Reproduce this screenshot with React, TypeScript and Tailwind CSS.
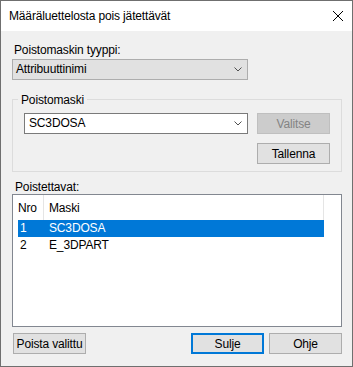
import React from "react";

function Chevron() {
  return (
    <svg width="8" height="5" viewBox="0 0 8 5" className="shrink-0">
      <path d="M0.5 0.5 L4 4 L7.5 0.5" fill="none" stroke="#505050" strokeWidth="1" />
    </svg>
  );
}

function Btn({ children, className = "" }: { children: React.ReactNode; className?: string }) {
  return (
    <div
      className={
        "w-[73px] h-[21px] flex items-center justify-center leading-[16px] " +
        className
      }
    >
      {children}
    </div>
  );
}

export default function App() {
  return (
    <div className="w-[353px] h-[367px] border border-[#6f6f6f] bg-[#f0f0f0] flex flex-col text-[12px] tracking-[-0.15px] text-black font-['Liberation_Sans',Arial,sans-serif] overflow-hidden">
      {/* Title bar */}
      <div className="h-[30px] bg-white flex items-center justify-between pl-[8px] pr-[9px] shrink-0">
        <span className="leading-[30px]">Määräluettelosta pois jätettävät</span>
        <svg width="10" height="10" viewBox="0 0 10 10">
          <path d="M0 0L10 10M10 0L0 10" stroke="#000" strokeWidth="1" />
        </svg>
      </div>

      {/* Body */}
      <div className="flex flex-col pl-[11px] pt-[11px]">
        <div className="h-[16px] leading-[16px] pl-[2px]">Poistomaskin tyyppi:</div>
        <div className="mt-[1px] w-[236px] h-[21px] border border-[#adadad] bg-[#e1e1e1] flex items-center justify-between pl-[3px] pr-[5px]">
          <span className="leading-[19px]">Attribuuttinimi</span>
          <Chevron />
        </div>

        {/* Group box */}
        <div className="relative mt-[19px] w-[330px] h-[73px] border border-[#dcdcdc] flex pt-[13px] pl-[11px]">
          <span className="absolute left-[5px] top-[-8px] px-[3px] bg-[#f0f0f0] leading-[16px]">
            Poistomaski
          </span>
          <div className="w-[224px] h-[21px] border border-[#7a7a7a] bg-white flex items-center justify-between pl-[4px] pr-[5px]">
            <span className="leading-[19px]">SC3DOSA</span>
            <Chevron />
          </div>
          <div className="ml-[9px] flex flex-col gap-[9px]">
            <Btn className="border border-[#bfbfbf] bg-[#cccccc] text-[#838383]">Valitse</Btn>
            <Btn className="border border-[#adadad] bg-[#e1e1e1]">Tallenna</Btn>
          </div>
        </div>

        <div className="mt-[9px] h-[13px] leading-[13px] pl-[3px]">Poistettavat:</div>

        {/* List view */}
        <div className="w-[330px] h-[133px] border border-[#828790] bg-white flex flex-col">
          <div className="ml-[5px] w-[306px] h-[25px] flex shrink-0">
            <div className="w-[26px] border-r border-[#e5e5e5] pt-[5px] leading-[16px]">Nro</div>
            <div className="w-[280px] border-r border-[#e5e5e5] pt-[5px] pl-[5px] leading-[16px]">Maski</div>
          </div>
          <div className="ml-[5px] w-[306px] h-[17px] flex items-center bg-[#0078d7] text-white leading-[17px]">
            <div className="w-[31px] pl-[2px]">1</div>
            <div>SC3DOSA</div>
          </div>
          <div className="ml-[5px] w-[306px] h-[17px] flex items-center leading-[17px]">
            <div className="w-[31px] pl-[2px]">2</div>
            <div>E_3DPART</div>
          </div>
        </div>

        {/* Bottom buttons */}
        <div className="mt-[6px] flex items-center pr-[10px]">
          <Btn className="ml-[1px] border border-[#adadad] bg-[#e1e1e1]">Poista valittu</Btn>
          <div className="flex-1" />
          <Btn className="border-2 border-[#0078d7] bg-[#e1e1e1]">Sulje</Btn>
          <Btn className="ml-[5px] border border-[#adadad] bg-[#e1e1e1]">Ohje</Btn>
        </div>
      </div>
    </div>
  );
}
